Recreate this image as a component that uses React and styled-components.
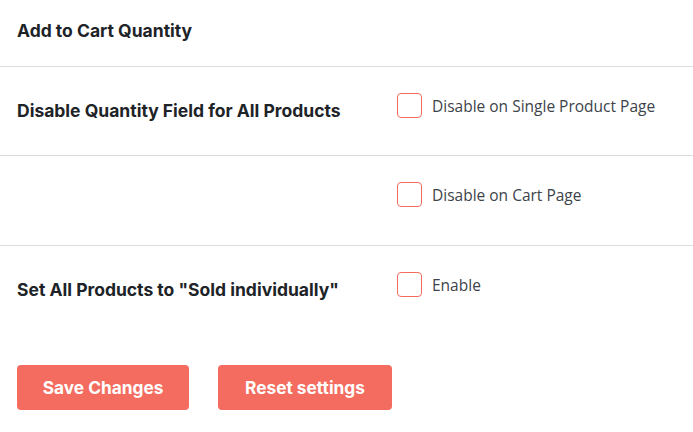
import React from 'react';
import styled, { createGlobalStyle } from 'styled-components';

const GlobalStyle = createGlobalStyle`
  html, body {
    margin: 0;
    padding: 0;
    background: #ffffff;
  }
  body {
    font-family: "Open Sans", "Noto Sans", sans-serif;
  }
`;

const rows = [
  { title: 'Disable Quantity Field for All Products', option: 'Disable on Single Product Page', height: 89 },
  { title: '', option: 'Disable on Cart Page', height: 90 },
  { title: 'Set All Products to "Sold individually"', option: 'Enable', height: 93, last: true },
];

const App = () => {
  return (
    <Page>
      <GlobalStyle />
      <Header>
        <Title>Add to Cart Quantity</Title>
      </Header>
      {rows.map((row, i) => (
        <Row key={i} $h={row.height} $last={row.last}>
          <Heading>{row.title}</Heading>
          <Field>
            <Check type="checkbox" />
            <Option>{row.option}</Option>
          </Field>
        </Row>
      ))}
      <Actions>
        <Button>Save Changes</Button>
        <Button $wide>Reset settings</Button>
      </Actions>
    </Page>
  );
};

export default App;

const Page = styled.div`
  width: 693px;
  min-height: 432px;
  background: #ffffff;
`;

const Header = styled.div`
  height: 67px;
  display: flex;
  align-items: center;
  padding: 0 17px 6px;
  box-sizing: border-box;
  border-bottom: 1px solid #dcdcde;
`;

const Title = styled.h2`
  margin: 0;
  font-family: Inter, "Liberation Sans", sans-serif;
  font-weight: 700;
  font-size: 17.5px;
  color: #1d2327;
`;

const Row = styled.div`
  display: grid;
  grid-template-columns: 380px 1fr;
  height: ${(p) => p.$h}px;
  padding-left: 17px;
  box-sizing: border-box;
  border-bottom: ${(p) => (p.$last ? 'none' : '1px solid #dcdcde')};
`;

const Heading = styled.div`
  padding-top: 33px;
  font-family: Inter, "Liberation Sans", sans-serif;
  font-weight: 700;
  font-size: 17.5px;
  line-height: 22px;
  color: #1d2327;
`;

const Field = styled.label`
  display: flex;
  align-items: center;
  align-self: start;
  gap: 10px;
  padding-top: 26px;
`;

const Check = styled.input`
  appearance: none;
  margin: 0;
  width: 25px;
  height: 25px;
  border: 1px solid #f36c5f;
  border-radius: 4px;
  background: #ffffff;
  box-sizing: border-box;
`;

const Option = styled.span`
  font-size: 15.5px;
  color: #3c434a;
`;

const Actions = styled.div`
  display: flex;
  gap: 29px;
  padding: 26px 17px 0;
`;

const Button = styled.button`
  width: ${(p) => (p.$wide ? '174px' : '172px')};
  height: 45px;
  border: none;
  border-radius: 4px;
  background: #f36c5f;
  color: #ffffff;
  font-family: Inter, "Liberation Sans", sans-serif;
  font-weight: 700;
  font-size: 17.3px;
  cursor: pointer;
`;
